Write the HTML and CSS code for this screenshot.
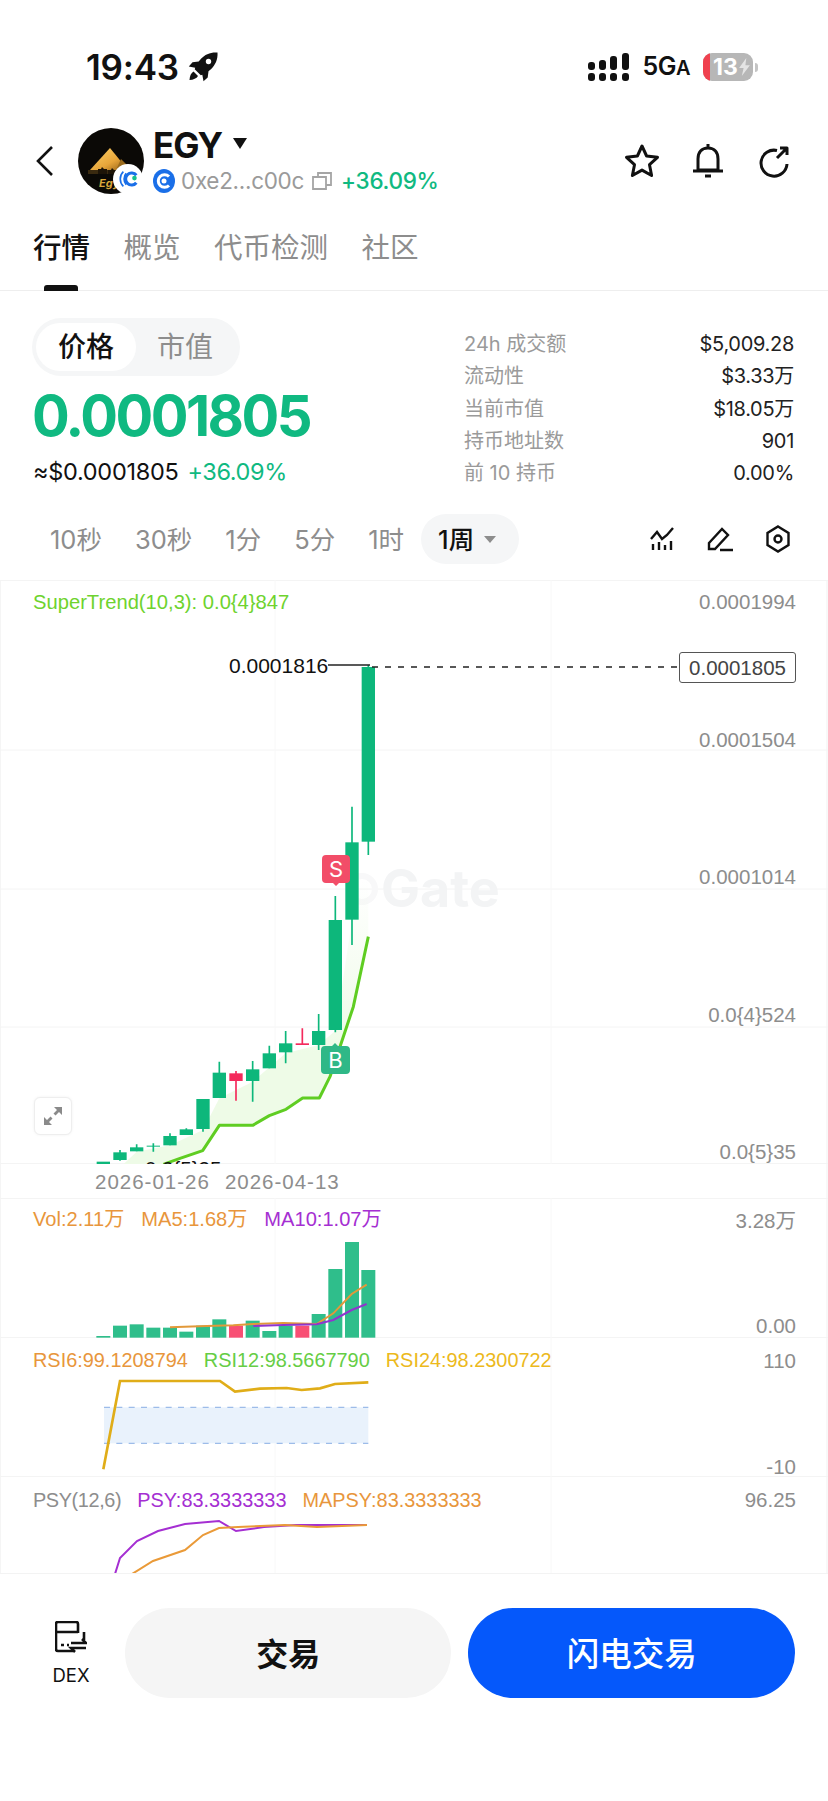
FILE: index.html
```html
<!DOCTYPE html>
<html lang="zh">
<head>
<meta charset="utf-8">
<title>EGY</title>
<link rel="stylesheet" href="styles.css">
</head>
<body>
<div class="page">
  <div class="status">
    <span class="time">19:43</span>
    <svg class="rocket" viewBox="0 0 30 30"><path d="M29.5 .5c-7-.5-12.500 1.800-16.500 6.300l-2.300 2.700-6.200.8L.8 14.500l6.400 1.200-.5 1.500 6.100 6.100 1.500-.5 1.200 6.400 4.200-3.700.8-6.200 2.700-2.300C27.200 13 30 7.500 29.500 .5z"/><circle class="rocket-eye" cx="20.500" cy="9.500" r="2.700"/><path d="M5.500 19.500c-2.500 1.500-3.800 4.500-4 8.500 4-.2 7-1.500 8.500-4z"/></svg>
    <div class="status-right">
      <svg class="signal" viewBox="0 0 41 28"><g><rect x="0" y="20" width="7" height="8" rx="3"/><rect x="11" y="20" width="7" height="8" rx="3"/><rect x="22" y="20" width="7" height="8" rx="3"/><rect x="34" y="20" width="7" height="8" rx="3"/><rect x="0" y="9" width="7" height="8" rx="3"/><rect x="11" y="7" width="7" height="10" rx="3"/><rect x="22" y="3" width="7" height="14" rx="3"/><rect x="34" y="0" width="7" height="17" rx="3"/></g></svg>
      <span class="net">5G<small>A</small></span>
      <div class="battery"><span class="battery-num">13</span><svg class="bolt" viewBox="0 0 12 20"><path d="M8 0 0 11h5l-2 9 9-12H7z"/></svg></div>
      <span class="battery-tip"></span>
    </div>
  </div>

  <header class="head">
    <svg class="back" viewBox="0 0 18 30"><path d="M16 1 2 15l14 14"/></svg>
    <div class="avatar">
      <svg viewBox="0 0 66 66"><defs><linearGradient id="gold" x1="0" y1="0" x2="1" y2="1"><stop offset="0" stop-color="#ffd469"/><stop offset=".6" stop-color="#e7a53a"/><stop offset="1" stop-color="#8c5a12"/></linearGradient></defs><circle cx="33" cy="33" r="33" fill="#0b0906"/><path d="M32 20 12 42h38z" fill="url(#gold)"/><path d="M43 31 54 42H38z" fill="#9a6a1c"/><path d="M10 42h46v4H10z" fill="#3a2a10"/><path class="camels" d="M20 46v-5h3l1-2 2 2h3v5zM30 46v-4h3l1-2 2 2h2v4z"/><text class="avatar-text" x="21" y="59">Egy</text></svg>
      <span class="avatar-badge"><svg viewBox="0 0 26 26"><path class="wave" d="M8 5c-4.500 4-4.500 12 0 16M11 7c-3 3-3 9 0 12"/><path class="ring" d="M22 9a6.500 6.500 0 1 0 0 8"/><circle class="dot" cx="20" cy="12" r="2.500"/></svg></span>
    </div>
    <div class="coin">
      <div class="coin-title"><span class="coin-name">EGY</span><span class="caret"></span></div>
      <div class="coin-sub">
        <svg class="chain" viewBox="0 0 22 24"><ellipse cx="11" cy="12" rx="11" ry="12" fill="#1a6fe8"/><path d="M16 7.500a6.300 6.300 0 1 0 0 9" fill="none" stroke="#fff" stroke-width="3"/><circle cx="11" cy="12" r="2.500" fill="#fff"/></svg>
        <span class="addr">0xe2...c00c</span>
        <svg class="copy" viewBox="0 0 20 18"><path d="M1 5h13v12H1zM6 5V1h13v12h-5"/></svg>
        <span class="pct">+36.09%</span>
      </div>
    </div>
    <div class="head-actions">
      <svg viewBox="0 0 36 36"><path d="M18 3l4.600 10 10.900 1.300-8 7.400 2.100 10.800L18 27.100 8.400 32.500l2.100-10.800-8-7.400L13.400 13z"/></svg>
      <svg viewBox="0 0 36 36"><path d="M18 5c-6.500 0-10 4.500-10 11v11h20V16c0-6.500-3.500-11-10-11zM18 1v4M3 28h30M15 33h6"/></svg>
      <svg viewBox="0 0 36 36"><path d="M21 7.500A13 13 0 1 0 31 21M24 5h7v7M31 5 21 15"/></svg>
    </div>
  </header>

  <nav class="tabs">
    <span class="tab active">行情</span>
    <span class="tab">概览</span>
    <span class="tab">代币检测</span>
    <span class="tab">社区</span>
  </nav>

  <section class="summary">
    <div class="summary-left">
      <div class="segment"><span class="seg on">价格</span><span class="seg">市值</span></div>
      <div class="price">0.0001805</div>
      <div class="price-sub"><span class="usd">≈$0.0001805</span><span class="pct">+36.09%</span></div>
    </div>
    <dl class="stats">
      <div class="stat"><dt>24h 成交额</dt><dd>$5,009.28</dd></div>
      <div class="stat"><dt>流动性</dt><dd>$3.33万</dd></div>
      <div class="stat"><dt>当前市值</dt><dd>$18.05万</dd></div>
      <div class="stat"><dt>持币地址数</dt><dd>901</dd></div>
      <div class="stat"><dt>前 10 持币</dt><dd>0.00%</dd></div>
    </dl>
  </section>

  <div class="frames">
    <span class="frame">10秒</span><span class="frame">30秒</span><span class="frame">1分</span><span class="frame">5分</span><span class="frame">1时</span>
    <span class="frame-on">1周<i class="frame-caret"></i></span>
    <div class="frame-tools">
      <svg class="tool1" viewBox="0 0 25 24"><path d="M1 12 7 5l5 7 5-4 6-7M3 17v6M9 15v8M15 18v5M21 14v9"/></svg>
      <svg class="tool2" viewBox="0 0 28 25"><path d="M3 16 16 2l6 6L9 22H3zM14 23h13"/></svg>
      <svg class="tool3" viewBox="0 0 24 28"><path d="M12 1.500 22.500 8v12L12 26.500 1.500 20V8z"/><circle cx="12" cy="14" r="3.500"/></svg>
    </div>
  </div>

  <div class="charts">
    <div class="panel panel-main">
      <svg class="plot" viewBox="0 580 828 584">
        <defs>
          <linearGradient id="trendFade" gradientUnits="userSpaceOnUse" x1="0" y1="300" x2="0" y2="820">
            <stop offset="0" class="fade-a"/>
            <stop offset="1" class="fade-b"/>
          </linearGradient>
        </defs>
        <g class="grid">
          <path d="M0 580.500H828M0 750H828M0 889H828M0 1027H828M0 1163.500H828"/>
        </g>
        <g class="grid-v"><path d="M275 580V1164M551 580V1164"/></g>
        <text class="mark" x="381" y="907">Gate</text>
        <circle class="mark-logo" cx="362" cy="889" r="13"/>
        <g transform="translate(0 780) scale(.33333)">
          <path class="trend-fill" d="M370 1153 410 1115 510 1096 609 1050 658 955 758 905 857 820 956 795 1006 752 1056 420 1105 225 1105 470 1060 680 1030 770 990 890 958 954 908 954 858 988 808 1007 758 1036 658 1036 608 1112 540 1135 490 1153z"/>
          <g class="wick-up">
            <path d="M360 1110V1142M410 1093V1114M460 1090V1115M510 1060V1096M559 1045V1065M609 957V1055M658 845V954M758 843V965M808 797V865M857 753V850M956 702V810M1006 348V757M1056 80V495M1105 -345V225"/>
          </g>
          <g class="wick-dn"><path d="M708 873V962M907 745V795"/></g>
          <g class="up">
            <rect x="290" y="1145" width="40" height="20"/>
            <rect x="340" y="1117" width="40" height="23"/>
            <rect x="390" y="1102" width="40" height="12"/>
            <rect x="440" y="1097" width="40" height="3"/>
            <rect x="490" y="1068" width="40" height="28"/>
            <rect x="539" y="1048" width="40" height="17"/>
            <rect x="589" y="957" width="40" height="90"/>
            <rect x="638" y="878" width="40" height="76"/>
            <rect x="738" y="868" width="40" height="35"/>
            <rect x="788" y="820" width="40" height="45"/>
            <rect x="837" y="790" width="40" height="27"/>
            <rect x="936" y="753" width="40" height="42"/>
            <rect x="986" y="420" width="40" height="330"/>
            <rect x="1036" y="187" width="40" height="232"/>
            <rect x="1085" y="-339" width="40" height="524"/>
          </g>
          <g class="dn">
            <rect x="688" y="880" width="40" height="23"/>
            <rect x="887" y="790" width="40" height="5"/>
          </g>
          <path class="trend" d="M490 1153 540 1135 608 1112 658 1036 758 1036 808 1007 858 988 908 954 958 954 990 890 1030 770 1060 680 1105 470"/>
        </g>
        <text class="lo" x="145" y="1176">0.0{5}35</text>
        <text class="hi" x="229" y="673">0.0001816</text>
        <path class="hi-line" d="M328 665H370"/>
        <path class="dash" d="M372 667H679"/>
        <path class="badge-s" d="M326 855h20a4 4 0 0 1 4 4v20a4 4 0 0 1-4 4h-7l-3 3-3-3h-7a4 4 0 0 1-4-4v-20a4 4 0 0 1 4-4z"/>
        <text class="badge-t" x="336" y="877">S</text>
        <path class="badge-b" d="M325 1046h7l3-3 3 3h8a4 4 0 0 1 4 4v20a4 4 0 0 1-4 4h-21a4 4 0 0 1-4-4v-20a4 4 0 0 1 4-4z"/>
        <text class="badge-t" x="335.500" y="1068">B</text>
      </svg>
      <div class="legend legend-st"><span class="c-st">SuperTrend(10,3): 0.0{4}847</span></div>
      <div class="axis axis-main"><span>0.0001994</span><span>0.0001504</span><span>0.0001014</span><span>0.0{4}524</span><span>0.0{5}35</span></div>
      <div class="last-price">0.0001805</div>
      <div class="expand"><svg viewBox="0 0 20 20"><path d="M11 1h8v8l-3-3-3.500 3.500-2-2L14 4zM9 19H1v-8l3 3 3.500-3.500 2 2L6 16z"/></svg></div>
    </div>

    <div class="dates"><span>2026-01-26</span><span>2026-04-13</span></div>

    <div class="panel panel-vol">
      <svg class="plot" viewBox="0 1198 828 140">
        <g class="grid"><path d="M0 1198.500H828M0 1337.500H828"/></g>
        <g class="grid-v"><path d="M275 1198V1338M551 1198V1338"/></g>
        <g transform="translate(0 1190) scale(.33333)">
          <g class="vol-up">
            <rect x="289" y="438" width="42" height="5"/>
            <rect x="339" y="407" width="42" height="36"/>
            <rect x="389" y="403" width="42" height="40"/>
            <rect x="439" y="413" width="42" height="30"/>
            <rect x="489" y="413" width="42" height="30"/>
            <rect x="538" y="425" width="42" height="18"/>
            <rect x="588" y="407" width="42" height="36"/>
            <rect x="637" y="388" width="42" height="55"/>
            <rect x="737" y="392" width="42" height="51"/>
            <rect x="787" y="423" width="42" height="20"/>
            <rect x="836" y="407" width="42" height="36"/>
            <rect x="935" y="372" width="42" height="71"/>
            <rect x="985" y="237" width="42" height="206"/>
            <rect x="1035" y="156" width="42" height="287"/>
            <rect x="1084" y="240" width="42" height="203"/>
          </g>
          <g class="vol-dn">
            <rect x="687" y="407" width="42" height="36"/>
            <rect x="886" y="407" width="42" height="36"/>
          </g>
          <path class="ma5" d="M510 412 620 408 700 406 760 402 850 399 950 402 1000 370 1055 312 1100 284"/>
          <path class="ma10" d="M760 408 850 405 950 403 1000 390 1055 360 1100 342"/>
        </g>
      </svg>
      <div class="legend legend-vol"><span class="c-or">Vol:2.11万</span><span class="c-or">MA5:1.68万</span><span class="c-pu">MA10:1.07万</span></div>
      <div class="axis axis-vol"><span>3.28万</span><span>0.00</span></div>
    </div>

    <div class="panel panel-rsi">
      <svg class="plot" viewBox="0 1338 828 139">
        <g class="grid"><path d="M0 1476.500H828"/></g>
        <g class="grid-v"><path d="M275 1338V1477M551 1338V1477"/></g>
        <g transform="translate(0 1190) scale(.33333)">
          <rect class="band" x="312" y="652" width="793" height="108"/>
          <path class="band-line" d="M312 652H1105M312 760H1105"/>
          <path class="rsi" d="M310 838 360 573 660 573 705 605 780 596 860 594 905 600 960 595 1005 582 1105 577"/>
        </g>
      </svg>
      <div class="legend legend-rsi"><span class="c-or">RSI6:99.1208794</span><span class="c-gr">RSI12:98.5667790</span><span class="c-ye">RSI24:98.2300722</span></div>
      <div class="axis axis-rsi"><span>110</span><span>-10</span></div>
    </div>

    <div class="panel panel-psy">
      <svg class="plot" viewBox="0 1477 828 96">
        <g class="grid-v"><path d="M275 1477V1573M551 1477V1573"/></g>
        <path class="psy" d="M115 1574 120 1558 137 1541 158 1531 185 1524 219 1521 236 1531 264 1527 296 1525 367 1525"/>
        <path class="mapsy" d="M132 1574 153 1561 185 1550 203 1535 219 1528 238 1527 285 1525 317 1527 367 1525"/>
      </svg>
      <div class="legend legend-psy"><span class="c-gy">PSY(12,6)</span><span class="c-pu">PSY:83.3333333</span><span class="c-or">MAPSY:83.3333333</span></div>
      <div class="axis axis-psy"><span>96.25</span></div>
    </div>
  </div>

  <footer class="foot">
    <div class="dex">
      <svg viewBox="0 0 32 33"><path d="M23 12V3a2 2 0 0 0-2-2H3a2 2 0 0 0-2 2v25a2 2 0 0 0 2 2h15M1 11h22M29 11v8"/><path class="dex-dots" d="M6 24h3M12 24h2"/><path d="M16 22h15l-4-4M31 27H16l4 4"/></svg>
      <span>DEX</span>
    </div>
    <button class="btn btn-light">交易</button>
    <button class="btn btn-blue">闪电交易</button>
  </footer>
</div>
</body>
</html>
```
FILE: styles.css
```css
* { box-sizing: border-box; }
html, body { margin: 0; padding: 0; background: #fff; }
body { font-family: Inter, "Noto Sans CJK SC", sans-serif; color: #111; }
.page { width: 828px; height: 1801px; overflow: hidden; }

/* status bar */
.status { display: flex; align-items: center; height: 28px; margin-top: 53px; padding: 0 70px 0 86px; }
.time { font-size: 35px; font-weight: 600; line-height: 28px; letter-spacing: -.2px; }
.rocket { width: 30px; height: 30px; margin-left: 9px; fill: #111; }
.rocket-eye { fill: #fff; }
.status-right { display: flex; align-items: center; margin-left: auto; }
.signal { width: 41px; height: 28px; fill: #111; }
.net { margin-left: 13px; font-size: 25px; font-weight: 600; line-height: 28px; letter-spacing: -.5px; }
.net small { font-size: 20px; }
.battery { position: relative; display: flex; align-items: center; justify-content: center; gap: 1px; width: 50px; height: 28px; margin-left: 13px; padding-left: 7px; border-radius: 9px; background: #b7b7b7; overflow: hidden; }
.battery::before { content: ""; position: absolute; left: 0; top: 0; bottom: 0; width: 7px; background: #f0414f; }
.battery-num { color: #fff; font-size: 23px; font-weight: 700; line-height: 28px; }
.bolt { width: 11px; height: 18px; fill: #e4e4e4; }
.battery-tip { width: 3px; height: 9px; margin-left: 2px; border-radius: 0 3px 3px 0; background: #c4c4c4; }

/* header */
.head { display: flex; align-items: center; height: 66px; margin-top: 47px; padding: 0 36px; }
.back { width: 18px; height: 30px; margin-right: 24px; fill: none; stroke: #111; stroke-width: 2.6; }
.avatar { position: relative; flex: none; width: 66px; height: 66px; }
.avatar > svg { display: block; width: 66px; height: 66px; }
.avatar-text { fill: #d9a63a; font-size: 11px; font-weight: 700; font-style: italic; }
.camels { fill: #1d1408; }
.avatar-badge { position: absolute; right: 1px; bottom: 0; display: flex; align-items: center; justify-content: center; width: 30px; height: 30px; border-radius: 50%; background: #fff; }
.avatar-badge svg { width: 24px; height: 24px; }
.wave { fill: none; stroke: #1a6fe8; stroke-width: 1.8; }
.ring { fill: none; stroke: #1a6fe8; stroke-width: 3.4; }
.dot { fill: #17c08a; }
.coin { margin-left: 9px; }
.coin-title { display: flex; align-items: center; height: 34px; }
.coin-name { font-size: 35px; font-weight: 700; line-height: 34px; letter-spacing: -1px; }
.caret { width: 0; height: 0; margin-left: 11px; margin-top: -3px; border: 7px solid transparent; border-top: 11px solid #111; border-bottom: 0; }
.coin-sub { display: flex; align-items: center; height: 26px; margin-top: 6px; }
.chain { width: 22px; height: 24px; }
.addr { margin-left: 6px; color: #9a9a9a; font-size: 22.500px; line-height: 26px; letter-spacing: -.3px; }
.copy { width: 20px; height: 18px; margin-left: 8px; fill: none; stroke: #a5a5a5; stroke-width: 1.8; }
.pct { color: #10b981; font-size: 23.500px; font-weight: 500; line-height: 26px; }
.coin-sub .pct { margin-left: 9px; font-size: 22.500px; letter-spacing: -.3px; }
.head-actions { display: flex; gap: 30px; margin-left: auto; }
.head-actions svg { width: 36px; height: 36px; fill: none; stroke: #111; stroke-width: 3; stroke-linejoin: round; }

/* tabs */
.tabs { display: flex; gap: 33.500px; height: 97px; padding: 34px 0 0 33px; border-bottom: 1px solid #eee; }
.tab { position: relative; color: #8d8d8d; font-size: 28.500px; line-height: 40px; height: 63px; }
.tab.active { color: #111; font-weight: 500; }
.tab.active::after { content: ""; position: absolute; left: 11px; bottom: 0; width: 34px; height: 6px; border-radius: 3px 3px 0 0; background: #111; }

/* summary */
.summary { display: flex; justify-content: space-between; padding: 27px 34px 0 32px; }
.segment { display: flex; width: 208px; height: 58px; padding: 5px 4px; border-radius: 29px; background: #f5f6f7; }
.seg { width: 100px; color: #8d8d8d; font-size: 28px; line-height: 48px; text-align: center; border-radius: 24px; }
.seg:last-child { width: 100px; margin-left: -2px; padding-left: 2px; }
.seg.on { color: #111; background: #fff; font-weight: 500; }
.price { margin-top: 8px; color: #10b981; font-size: 56px; font-weight: 700; line-height: 64px; letter-spacing: -2.500px; }
.price-sub { display: flex; align-items: center; gap: 9px; height: 30px; margin-top: 9px; margin-left: 1px; }
.usd { font-size: 23.500px; line-height: 30px; letter-spacing: -.3px; }
.price-sub .pct { font-weight: 400; letter-spacing: -.4px; }
.stats { width: 330px; margin: 0; padding-top: 10px; }
.stat { display: flex; justify-content: space-between; height: 32.250px; line-height: 32px; font-size: 20px; }
.stat dt { color: #9a9a9a; }
.stat dd { margin: 0; color: #222; letter-spacing: -.3px; }

/* time frames */
.frames { display: flex; align-items: center; gap: 33px; height: 50px; margin-top: 25px; padding: 0 38px 0 50px; color: #8d8d8d; font-size: 25.500px; }
.frame { padding-bottom: 3px; }
.frame-on { display: flex; align-items: center; height: 50px; margin-left: -16px; padding: 0 23px 3px 17px; border-radius: 25px; background: #f5f6f7; color: #111; font-weight: 500; }
.frame-caret { width: 0; height: 0; margin-left: 10px; margin-top: 3px; border: 6px solid transparent; border-top: 7px solid #8d8d8d; border-bottom: 0; }
.frame-tools { display: flex; align-items: center; margin-left: auto; }
.frame-tools svg { fill: none; stroke: #111; stroke-width: 2.400; }
.tool1 { width: 25px; height: 24px; }
.tool2 { width: 28px; height: 25px; margin-left: 31px; }
.tool3 { width: 24px; height: 28px; margin-left: 32px; }

/* charts */
.charts { margin-top: 16px; box-shadow: inset 1px 0 #f5f5f5, inset -2px 0 #f8f8f8; font-family: "Liberation Sans", "Noto Sans CJK SC", sans-serif; font-size: 20.500px; }
.panel { position: relative; overflow: hidden; }
.panel-main { height: 584px; }
.panel-vol { height: 140px; }
.panel-rsi { height: 139px; }
.panel-psy { height: 96px; }
.plot { position: absolute; left: 0; top: 0; width: 828px; height: 100%; }
.legend { position: relative; display: flex; padding: 10px 0 0 33px; font-size: 19.900px; line-height: 24px; }
.legend-st { font-size: 20.200px; }
.legend-vol { gap: 17px; padding-top: 9px; font-size: 20.100px; }
.legend-rsi { gap: 16px; }
.legend-psy { gap: 16px; padding-top: 11px; }
.c-st { color: #6ed32e; }
.c-or { color: #e8963c; }
.c-pu { color: #a52fd2; }
.c-gr { color: #66cd45; }
.c-ye { color: #ecb91c; }
.c-gy { color: #8d8d8d; letter-spacing: -.4px; }
.axis { position: absolute; right: 32px; top: 10px; bottom: 0; display: flex; flex-direction: column; justify-content: space-between; align-items: flex-end; color: #8d8d8d; line-height: 24px; }
.axis-vol { top: 11px; }
.axis-rsi { top: 11px; bottom: -2px; }
.axis-psy { top: 11px; }

.grid path { fill: none; stroke: #f4f4f4; stroke-width: 1; }
.grid-v path { fill: none; stroke: #f8f8f8; stroke-width: 1; }
.mark { fill: #f3f4f5; font-size: 52px; font-weight: 700; font-family: Inter, sans-serif; }
.mark-logo { fill: none; stroke: #f8f8f9; stroke-width: 6; }
.fade-a { stop-color: #eefbe7; stop-opacity: 0; }
.fade-b { stop-color: #eefbe7; stop-opacity: 1; }
.trend-fill { fill: url(#trendFade); }
.trend { fill: none; stroke: #5fcd22; stroke-width: 9; stroke-linejoin: round; }
.up { fill: #0db77b; }
.dn { fill: #f42a5c; }
.wick-up path { fill: none; stroke: #0db77b; stroke-width: 5; }
.wick-dn path { fill: none; stroke: #f42a5c; stroke-width: 5; }
.lo { fill: #111; font-size: 20.500px; }
.hi { fill: #111; font-size: 21px; }
.hi-line { stroke: #222; stroke-width: 1.500; }
.dash { stroke: #222; stroke-width: 1.300; stroke-dasharray: 6 7; fill: none; }
.badge-s { fill: #f24d68; }
.badge-b { fill: #2fb887; }
.badge-t { fill: #fff; font-size: 22px; text-anchor: middle; font-family: Inter, sans-serif; }
.last-price { position: absolute; left: 679px; top: 72px; width: 117px; height: 31px; border: 1px solid #555; border-radius: 3px; background: #fff; color: #444; line-height: 29px; text-align: center; }
.expand { position: absolute; left: 34px; top: 517px; display: flex; align-items: center; justify-content: center; width: 38px; height: 38px; border: 1px solid #eee; border-radius: 6px; background: #fff; box-shadow: 0 0 3px rgba(0,0,0,.06); }
.expand svg { width: 20px; height: 20px; fill: #8a8a8a; }

.dates { display: flex; gap: 15px; height: 34px; padding-left: 95px; color: #8d8d8d; font-size: 20.500px; line-height: 36px; letter-spacing: 1px; }

.vol-up { fill: #2fbe8b; }
.vol-dn { fill: #f84f74; }
.ma5 { fill: none; stroke: #e2993a; stroke-width: 6; }
.ma10 { fill: none; stroke: #8f35cf; stroke-width: 6; }
.band { fill: #e9f2fc; }
.band-line { fill: none; stroke: #9dbce9; stroke-width: 4; stroke-dasharray: 18 19; }
.rsi { fill: none; stroke: #e0ad18; stroke-width: 8; }
.psy { fill: none; stroke: #a52fd2; stroke-width: 2; }
.mapsy { fill: none; stroke: #ea9a38; stroke-width: 2; }

/* footer */
.foot { display: flex; align-items: flex-start; padding: 34px 33px 0 50px; border-top: 1px solid #f3f3f3; }
.dex { display: flex; flex-direction: column; align-items: center; width: 42px; margin-right: 33px; margin-top: 13px; font-size: 18.500px; line-height: 24px; }
.dex svg { width: 32px; height: 33px; margin-bottom: 9px; fill: none; stroke: #111; stroke-width: 2.600; }
.btn { width: 327px; height: 90px; padding-bottom: 4px; border: 0; border-radius: 46px; font-family: Inter, "Noto Sans CJK SC", sans-serif; font-size: 32px; }
.btn-light { background: #f5f5f5; color: #111; font-weight: 700; }
.btn-blue { margin-left: 17px; background: #0558fb; color: #fff; font-size: 32.500px; font-weight: 500; }
```
